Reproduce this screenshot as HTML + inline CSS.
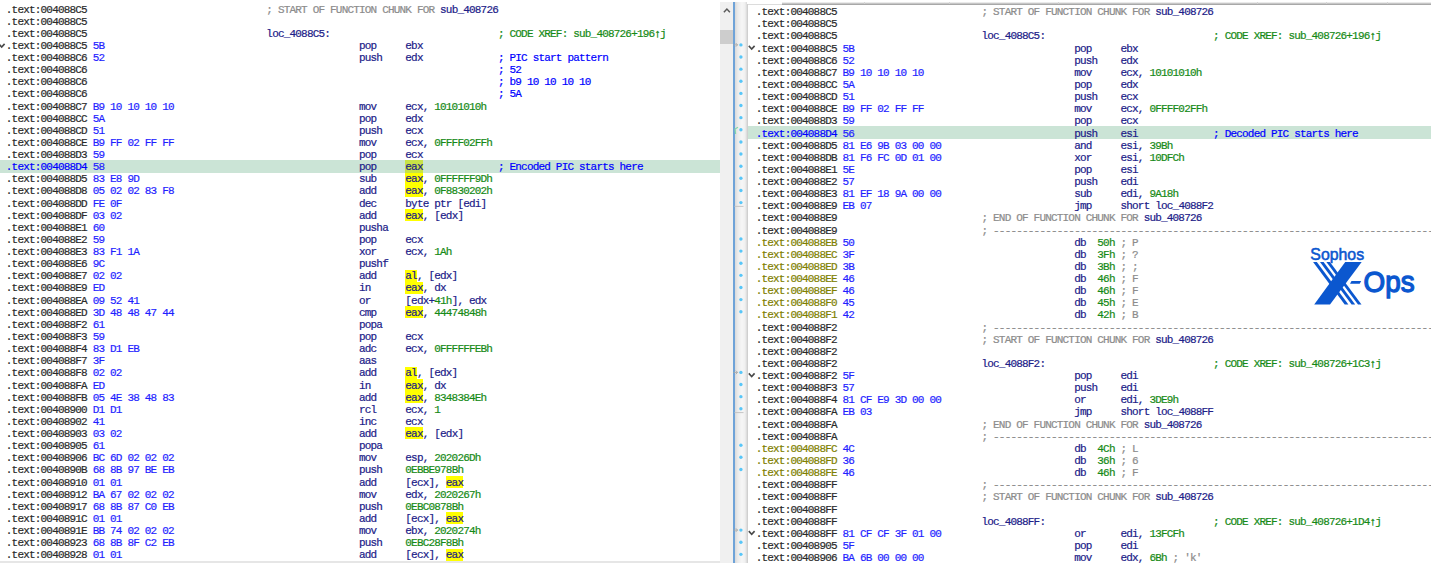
<!DOCTYPE html>
<html><head><meta charset="utf-8"><style>
*{margin:0;padding:0;box-sizing:border-box}
html,body{width:1431px;height:568px;overflow:hidden;background:#fff;position:relative}
.t{position:absolute;font-family:"Liberation Mono",monospace;font-size:11px;line-height:12.13px;letter-spacing:-0.81px;white-space:pre;-webkit-text-stroke:0.2px currentColor}
.a{color:#2a2a2a} .b{color:#1f1fff} .n{color:#202088} .g{color:#168a16} .gr{color:#8c8c8c} .u{color:#0000ff} .o{color:#808000} .h{color:#0000ff}
.ar{color:#168a16;-webkit-text-stroke:0.35px #168a16}
.hl{position:absolute;height:12.13px;background:#cbe4d6}
.ybg{position:absolute;height:12.13px;background:#ffff00}

.sb{position:absolute;left:720px;top:2px;width:13px;height:561px;background:#f0f0f0}
.thumb{position:absolute;left:720px;top:30px;width:13px;height:14px;background:#cdcdcd}
.bline{position:absolute;left:733px;top:2px;width:2px;height:561px;background:#6fa3d8}
.gut{position:absolute;left:735px;top:2px;width:12px;height:561px;background:linear-gradient(to right,#dadada 0px,#ececec 3px,#f6f6f6 7px,#f0f0f0 10px,#d8d8d8 12px)}
.gline{position:absolute;left:747px;top:4px;width:1px;height:559px;background:#d0d0d0}
.tline{position:absolute;left:748px;top:4px;width:683px;height:1px;background:#dcdcdc}
.tline2{position:absolute;left:782px;top:2px;width:649px;height:3px;background:linear-gradient(#f0f0f0 0,#e4e4e4 1px,#a8a8a8 2px,#a8a8a8 3px)}
.dot{position:absolute;width:3.3px;height:3.3px;border-radius:50%;background:#45c2f7}
.sep{position:absolute;left:734px;width:10px;height:1px;background:#b0b0b0}
.bot{position:absolute;left:0;top:561px;width:720px;height:2px;background:#e6e6e6}
.logo{position:absolute;left:1300px;top:240px;width:131px;height:70px}

</style></head><body>
<div id="lp" style="position:absolute;left:0;top:0;width:720px;height:563px;overflow:hidden">
<div class="hl" style="top:160.49px;left:0px;width:720px"></div>
<div class="ybg" style="top:160.49px;left:405.31px;width:17.37px;background:#c8e246"></div>
<div class="ybg" style="top:172.62px;left:405.31px;width:17.37px"></div>
<div class="ybg" style="top:184.75px;left:405.31px;width:17.37px"></div>
<div class="ybg" style="top:209.01px;left:405.31px;width:17.37px"></div>
<div class="ybg" style="top:269.66px;left:405.31px;width:11.58px"></div>
<div class="ybg" style="top:281.79px;left:405.31px;width:17.37px"></div>
<div class="ybg" style="top:306.05px;left:405.31px;width:17.37px"></div>
<div class="ybg" style="top:366.70px;left:405.31px;width:11.58px"></div>
<div class="ybg" style="top:378.83px;left:405.31px;width:17.37px"></div>
<div class="ybg" style="top:390.96px;left:405.31px;width:17.37px"></div>
<div class="ybg" style="top:427.35px;left:405.31px;width:17.37px"></div>
<div class="ybg" style="top:475.87px;left:445.84px;width:17.37px"></div>
<div class="ybg" style="top:512.26px;left:445.84px;width:17.37px"></div>
<div class="ybg" style="top:548.65px;left:445.84px;width:17.37px"></div>
<div class="t a" style="top:3.50px;left:5.80px">.text:004088C5</div>
<div class="t gr" style="top:3.50px;left:266.35px">; START OF FUNCTION CHUNK FOR </div>
<div class="t n" style="top:3.50px;left:440.05px">sub_408726</div>
<div class="t a" style="top:15.63px;left:5.80px">.text:004088C5</div>
<div class="t a" style="top:27.76px;left:5.80px">.text:004088C5</div>
<div class="t n" style="top:27.76px;left:266.35px">loc_4088C5:</div>
<div class="t g" style="top:27.76px;left:497.95px">; CODE XREF: sub_408726+196</div>
<div class="t ar" style="top:27.76px;left:654.28px">↑</div>
<div class="t g" style="top:27.76px;left:660.07px">j</div>
<div class="t a" style="top:39.89px;left:5.80px">.text:004088C5</div>
<div class="t b" style="top:39.89px;left:92.65px">5B</div>
<div class="t n" style="top:39.89px;left:358.99px">pop</div>
<div class="t n" style="top:39.89px;left:405.31px">ebx</div>
<div class="t a" style="top:52.02px;left:5.80px">.text:004088C6</div>
<div class="t b" style="top:52.02px;left:92.65px">52</div>
<div class="t n" style="top:52.02px;left:358.99px">push</div>
<div class="t n" style="top:52.02px;left:405.31px">edx</div>
<div class="t u" style="top:52.02px;left:497.95px">; PIC start pattern</div>
<div class="t a" style="top:64.15px;left:5.80px">.text:004088C6</div>
<div class="t u" style="top:64.15px;left:497.95px">; 52</div>
<div class="t a" style="top:76.28px;left:5.80px">.text:004088C6</div>
<div class="t u" style="top:76.28px;left:497.95px">; b9 10 10 10 10</div>
<div class="t a" style="top:88.41px;left:5.80px">.text:004088C6</div>
<div class="t u" style="top:88.41px;left:497.95px">; 5A</div>
<div class="t a" style="top:100.54px;left:5.80px">.text:004088C7</div>
<div class="t b" style="top:100.54px;left:92.65px">B9 10 10 10 10</div>
<div class="t n" style="top:100.54px;left:358.99px">mov</div>
<div class="t n" style="top:100.54px;left:405.31px">ecx, </div>
<div class="t g" style="top:100.54px;left:434.26px">10101010h</div>
<div class="t a" style="top:112.67px;left:5.80px">.text:004088CC</div>
<div class="t b" style="top:112.67px;left:92.65px">5A</div>
<div class="t n" style="top:112.67px;left:358.99px">pop</div>
<div class="t n" style="top:112.67px;left:405.31px">edx</div>
<div class="t a" style="top:124.80px;left:5.80px">.text:004088CD</div>
<div class="t b" style="top:124.80px;left:92.65px">51</div>
<div class="t n" style="top:124.80px;left:358.99px">push</div>
<div class="t n" style="top:124.80px;left:405.31px">ecx</div>
<div class="t a" style="top:136.93px;left:5.80px">.text:004088CE</div>
<div class="t b" style="top:136.93px;left:92.65px">B9 FF 02 FF FF</div>
<div class="t n" style="top:136.93px;left:358.99px">mov</div>
<div class="t n" style="top:136.93px;left:405.31px">ecx, </div>
<div class="t g" style="top:136.93px;left:434.26px">0FFFF02FFh</div>
<div class="t a" style="top:149.06px;left:5.80px">.text:004088D3</div>
<div class="t b" style="top:149.06px;left:92.65px">59</div>
<div class="t n" style="top:149.06px;left:358.99px">pop</div>
<div class="t n" style="top:149.06px;left:405.31px">ecx</div>
<div class="t h" style="top:161.19px;left:5.80px">.text:004088D4</div>
<div class="t b" style="top:161.19px;left:92.65px">58</div>
<div class="t n" style="top:161.19px;left:358.99px">pop</div>
<div class="t n" style="top:161.19px;left:405.31px">eax</div>
<div class="t u" style="top:161.19px;left:497.95px">; Encoded PIC starts here</div>
<div class="t a" style="top:173.32px;left:5.80px">.text:004088D5</div>
<div class="t b" style="top:173.32px;left:92.65px">83 E8 9D</div>
<div class="t n" style="top:173.32px;left:358.99px">sub</div>
<div class="t n" style="top:173.32px;left:405.31px">eax</div>
<div class="t n" style="top:173.32px;left:422.68px">, </div>
<div class="t g" style="top:173.32px;left:434.26px">0FFFFFF9Dh</div>
<div class="t a" style="top:185.45px;left:5.80px">.text:004088D8</div>
<div class="t b" style="top:185.45px;left:92.65px">05 02 02 83 F8</div>
<div class="t n" style="top:185.45px;left:358.99px">add</div>
<div class="t n" style="top:185.45px;left:405.31px">eax</div>
<div class="t n" style="top:185.45px;left:422.68px">, </div>
<div class="t g" style="top:185.45px;left:434.26px">0F8830202h</div>
<div class="t a" style="top:197.58px;left:5.80px">.text:004088DD</div>
<div class="t b" style="top:197.58px;left:92.65px">FE 0F</div>
<div class="t n" style="top:197.58px;left:358.99px">dec</div>
<div class="t n" style="top:197.58px;left:405.31px">byte ptr [edi]</div>
<div class="t a" style="top:209.71px;left:5.80px">.text:004088DF</div>
<div class="t b" style="top:209.71px;left:92.65px">03 02</div>
<div class="t n" style="top:209.71px;left:358.99px">add</div>
<div class="t n" style="top:209.71px;left:405.31px">eax</div>
<div class="t n" style="top:209.71px;left:422.68px">, [edx]</div>
<div class="t a" style="top:221.84px;left:5.80px">.text:004088E1</div>
<div class="t b" style="top:221.84px;left:92.65px">60</div>
<div class="t n" style="top:221.84px;left:358.99px">pusha</div>
<div class="t a" style="top:233.97px;left:5.80px">.text:004088E2</div>
<div class="t b" style="top:233.97px;left:92.65px">59</div>
<div class="t n" style="top:233.97px;left:358.99px">pop</div>
<div class="t n" style="top:233.97px;left:405.31px">ecx</div>
<div class="t a" style="top:246.10px;left:5.80px">.text:004088E3</div>
<div class="t b" style="top:246.10px;left:92.65px">83 F1 1A</div>
<div class="t n" style="top:246.10px;left:358.99px">xor</div>
<div class="t n" style="top:246.10px;left:405.31px">ecx, </div>
<div class="t g" style="top:246.10px;left:434.26px">1Ah</div>
<div class="t a" style="top:258.23px;left:5.80px">.text:004088E6</div>
<div class="t b" style="top:258.23px;left:92.65px">9C</div>
<div class="t n" style="top:258.23px;left:358.99px">pushf</div>
<div class="t a" style="top:270.36px;left:5.80px">.text:004088E7</div>
<div class="t b" style="top:270.36px;left:92.65px">02 02</div>
<div class="t n" style="top:270.36px;left:358.99px">add</div>
<div class="t n" style="top:270.36px;left:405.31px">al</div>
<div class="t n" style="top:270.36px;left:416.89px">, [edx]</div>
<div class="t a" style="top:282.49px;left:5.80px">.text:004088E9</div>
<div class="t b" style="top:282.49px;left:92.65px">ED</div>
<div class="t n" style="top:282.49px;left:358.99px">in</div>
<div class="t n" style="top:282.49px;left:405.31px">eax</div>
<div class="t n" style="top:282.49px;left:422.68px">, dx</div>
<div class="t a" style="top:294.62px;left:5.80px">.text:004088EA</div>
<div class="t b" style="top:294.62px;left:92.65px">09 52 41</div>
<div class="t n" style="top:294.62px;left:358.99px">or</div>
<div class="t n" style="top:294.62px;left:405.31px">[edx+</div>
<div class="t g" style="top:294.62px;left:434.26px">41h</div>
<div class="t n" style="top:294.62px;left:451.63px">], edx</div>
<div class="t a" style="top:306.75px;left:5.80px">.text:004088ED</div>
<div class="t b" style="top:306.75px;left:92.65px">3D 48 48 47 44</div>
<div class="t n" style="top:306.75px;left:358.99px">cmp</div>
<div class="t n" style="top:306.75px;left:405.31px">eax</div>
<div class="t n" style="top:306.75px;left:422.68px">, </div>
<div class="t g" style="top:306.75px;left:434.26px">44474848h</div>
<div class="t a" style="top:318.88px;left:5.80px">.text:004088F2</div>
<div class="t b" style="top:318.88px;left:92.65px">61</div>
<div class="t n" style="top:318.88px;left:358.99px">popa</div>
<div class="t a" style="top:331.01px;left:5.80px">.text:004088F3</div>
<div class="t b" style="top:331.01px;left:92.65px">59</div>
<div class="t n" style="top:331.01px;left:358.99px">pop</div>
<div class="t n" style="top:331.01px;left:405.31px">ecx</div>
<div class="t a" style="top:343.14px;left:5.80px">.text:004088F4</div>
<div class="t b" style="top:343.14px;left:92.65px">83 D1 EB</div>
<div class="t n" style="top:343.14px;left:358.99px">adc</div>
<div class="t n" style="top:343.14px;left:405.31px">ecx, </div>
<div class="t g" style="top:343.14px;left:434.26px">0FFFFFFEBh</div>
<div class="t a" style="top:355.27px;left:5.80px">.text:004088F7</div>
<div class="t b" style="top:355.27px;left:92.65px">3F</div>
<div class="t n" style="top:355.27px;left:358.99px">aas</div>
<div class="t a" style="top:367.40px;left:5.80px">.text:004088F8</div>
<div class="t b" style="top:367.40px;left:92.65px">02 02</div>
<div class="t n" style="top:367.40px;left:358.99px">add</div>
<div class="t n" style="top:367.40px;left:405.31px">al</div>
<div class="t n" style="top:367.40px;left:416.89px">, [edx]</div>
<div class="t a" style="top:379.53px;left:5.80px">.text:004088FA</div>
<div class="t b" style="top:379.53px;left:92.65px">ED</div>
<div class="t n" style="top:379.53px;left:358.99px">in</div>
<div class="t n" style="top:379.53px;left:405.31px">eax</div>
<div class="t n" style="top:379.53px;left:422.68px">, dx</div>
<div class="t a" style="top:391.66px;left:5.80px">.text:004088FB</div>
<div class="t b" style="top:391.66px;left:92.65px">05 4E 38 48 83</div>
<div class="t n" style="top:391.66px;left:358.99px">add</div>
<div class="t n" style="top:391.66px;left:405.31px">eax</div>
<div class="t n" style="top:391.66px;left:422.68px">, </div>
<div class="t g" style="top:391.66px;left:434.26px">8348384Eh</div>
<div class="t a" style="top:403.79px;left:5.80px">.text:00408900</div>
<div class="t b" style="top:403.79px;left:92.65px">D1 D1</div>
<div class="t n" style="top:403.79px;left:358.99px">rcl</div>
<div class="t n" style="top:403.79px;left:405.31px">ecx, </div>
<div class="t g" style="top:403.79px;left:434.26px">1</div>
<div class="t a" style="top:415.92px;left:5.80px">.text:00408902</div>
<div class="t b" style="top:415.92px;left:92.65px">41</div>
<div class="t n" style="top:415.92px;left:358.99px">inc</div>
<div class="t n" style="top:415.92px;left:405.31px">ecx</div>
<div class="t a" style="top:428.05px;left:5.80px">.text:00408903</div>
<div class="t b" style="top:428.05px;left:92.65px">03 02</div>
<div class="t n" style="top:428.05px;left:358.99px">add</div>
<div class="t n" style="top:428.05px;left:405.31px">eax</div>
<div class="t n" style="top:428.05px;left:422.68px">, [edx]</div>
<div class="t a" style="top:440.18px;left:5.80px">.text:00408905</div>
<div class="t b" style="top:440.18px;left:92.65px">61</div>
<div class="t n" style="top:440.18px;left:358.99px">popa</div>
<div class="t a" style="top:452.31px;left:5.80px">.text:00408906</div>
<div class="t b" style="top:452.31px;left:92.65px">BC 6D 02 02 02</div>
<div class="t n" style="top:452.31px;left:358.99px">mov</div>
<div class="t n" style="top:452.31px;left:405.31px">esp, </div>
<div class="t g" style="top:452.31px;left:434.26px">202026Dh</div>
<div class="t a" style="top:464.44px;left:5.80px">.text:0040890B</div>
<div class="t b" style="top:464.44px;left:92.65px">68 8B 97 BE EB</div>
<div class="t n" style="top:464.44px;left:358.99px">push</div>
<div class="t g" style="top:464.44px;left:405.31px">0EBBE978Bh</div>
<div class="t a" style="top:476.57px;left:5.80px">.text:00408910</div>
<div class="t b" style="top:476.57px;left:92.65px">01 01</div>
<div class="t n" style="top:476.57px;left:358.99px">add</div>
<div class="t n" style="top:476.57px;left:405.31px">[ecx], </div>
<div class="t n" style="top:476.57px;left:445.84px">eax</div>
<div class="t a" style="top:488.70px;left:5.80px">.text:00408912</div>
<div class="t b" style="top:488.70px;left:92.65px">BA 67 02 02 02</div>
<div class="t n" style="top:488.70px;left:358.99px">mov</div>
<div class="t n" style="top:488.70px;left:405.31px">edx, </div>
<div class="t g" style="top:488.70px;left:434.26px">2020267h</div>
<div class="t a" style="top:500.83px;left:5.80px">.text:00408917</div>
<div class="t b" style="top:500.83px;left:92.65px">68 8B 87 C0 EB</div>
<div class="t n" style="top:500.83px;left:358.99px">push</div>
<div class="t g" style="top:500.83px;left:405.31px">0EBC0878Bh</div>
<div class="t a" style="top:512.96px;left:5.80px">.text:0040891C</div>
<div class="t b" style="top:512.96px;left:92.65px">01 01</div>
<div class="t n" style="top:512.96px;left:358.99px">add</div>
<div class="t n" style="top:512.96px;left:405.31px">[ecx], </div>
<div class="t n" style="top:512.96px;left:445.84px">eax</div>
<div class="t a" style="top:525.09px;left:5.80px">.text:0040891E</div>
<div class="t b" style="top:525.09px;left:92.65px">BB 74 02 02 02</div>
<div class="t n" style="top:525.09px;left:358.99px">mov</div>
<div class="t n" style="top:525.09px;left:405.31px">ebx, </div>
<div class="t g" style="top:525.09px;left:434.26px">2020274h</div>
<div class="t a" style="top:537.22px;left:5.80px">.text:00408923</div>
<div class="t b" style="top:537.22px;left:92.65px">68 8B 8F C2 EB</div>
<div class="t n" style="top:537.22px;left:358.99px">push</div>
<div class="t g" style="top:537.22px;left:405.31px">0EBC28F8Bh</div>
<div class="t a" style="top:549.35px;left:5.80px">.text:00408928</div>
<div class="t b" style="top:549.35px;left:92.65px">01 01</div>
<div class="t n" style="top:549.35px;left:358.99px">add</div>
<div class="t n" style="top:549.35px;left:405.31px">[ecx], </div>
<div class="t n" style="top:549.35px;left:445.84px">eax</div>
</div>
<div id="rp" style="position:absolute;left:748px;top:5px;width:683px;height:558px;overflow:hidden">
<div style="position:absolute;left:-748px;top:-5px;width:1431px;height:568px">
<div class="hl" style="top:126.40px;left:748px;width:683px"></div>
<div class="t a" style="top:6.20px;left:755.70px">.text:004088C5</div>
<div class="t gr" style="top:6.20px;left:981.51px">; START OF FUNCTION CHUNK FOR </div>
<div class="t n" style="top:6.20px;left:1155.21px">sub_408726</div>
<div class="t a" style="top:18.33px;left:755.70px">.text:004088C5</div>
<div class="t a" style="top:30.46px;left:755.70px">.text:004088C5</div>
<div class="t n" style="top:30.46px;left:981.51px">loc_4088C5:</div>
<div class="t g" style="top:30.46px;left:1213.11px">; CODE XREF: sub_408726+196</div>
<div class="t ar" style="top:30.46px;left:1369.44px">↑</div>
<div class="t g" style="top:30.46px;left:1375.23px">j</div>
<div class="t a" style="top:42.59px;left:755.70px">.text:004088C5</div>
<div class="t b" style="top:42.59px;left:842.55px">5B</div>
<div class="t n" style="top:42.59px;left:1074.15px">pop</div>
<div class="t n" style="top:42.59px;left:1120.47px">ebx</div>
<div class="t a" style="top:54.72px;left:755.70px">.text:004088C6</div>
<div class="t b" style="top:54.72px;left:842.55px">52</div>
<div class="t n" style="top:54.72px;left:1074.15px">push</div>
<div class="t n" style="top:54.72px;left:1120.47px">edx</div>
<div class="t a" style="top:66.85px;left:755.70px">.text:004088C7</div>
<div class="t b" style="top:66.85px;left:842.55px">B9 10 10 10 10</div>
<div class="t n" style="top:66.85px;left:1074.15px">mov</div>
<div class="t n" style="top:66.85px;left:1120.47px">ecx, </div>
<div class="t g" style="top:66.85px;left:1149.42px">10101010h</div>
<div class="t a" style="top:78.98px;left:755.70px">.text:004088CC</div>
<div class="t b" style="top:78.98px;left:842.55px">5A</div>
<div class="t n" style="top:78.98px;left:1074.15px">pop</div>
<div class="t n" style="top:78.98px;left:1120.47px">edx</div>
<div class="t a" style="top:91.11px;left:755.70px">.text:004088CD</div>
<div class="t b" style="top:91.11px;left:842.55px">51</div>
<div class="t n" style="top:91.11px;left:1074.15px">push</div>
<div class="t n" style="top:91.11px;left:1120.47px">ecx</div>
<div class="t a" style="top:103.24px;left:755.70px">.text:004088CE</div>
<div class="t b" style="top:103.24px;left:842.55px">B9 FF 02 FF FF</div>
<div class="t n" style="top:103.24px;left:1074.15px">mov</div>
<div class="t n" style="top:103.24px;left:1120.47px">ecx, </div>
<div class="t g" style="top:103.24px;left:1149.42px">0FFFF02FFh</div>
<div class="t a" style="top:115.37px;left:755.70px">.text:004088D3</div>
<div class="t b" style="top:115.37px;left:842.55px">59</div>
<div class="t n" style="top:115.37px;left:1074.15px">pop</div>
<div class="t n" style="top:115.37px;left:1120.47px">ecx</div>
<div class="t h" style="top:127.50px;left:755.70px">.text:004088D4</div>
<div class="t b" style="top:127.50px;left:842.55px">56</div>
<div class="t n" style="top:127.50px;left:1074.15px">push</div>
<div class="t n" style="top:127.50px;left:1120.47px">esi</div>
<div class="t u" style="top:127.50px;left:1213.11px">; Decoded PIC starts here</div>
<div class="t a" style="top:139.63px;left:755.70px">.text:004088D5</div>
<div class="t b" style="top:139.63px;left:842.55px">81 E6 9B 03 00 00</div>
<div class="t n" style="top:139.63px;left:1074.15px">and</div>
<div class="t n" style="top:139.63px;left:1120.47px">esi, </div>
<div class="t g" style="top:139.63px;left:1149.42px">39Bh</div>
<div class="t a" style="top:151.76px;left:755.70px">.text:004088DB</div>
<div class="t b" style="top:151.76px;left:842.55px">81 F6 FC 0D 01 00</div>
<div class="t n" style="top:151.76px;left:1074.15px">xor</div>
<div class="t n" style="top:151.76px;left:1120.47px">esi, </div>
<div class="t g" style="top:151.76px;left:1149.42px">10DFCh</div>
<div class="t a" style="top:163.89px;left:755.70px">.text:004088E1</div>
<div class="t b" style="top:163.89px;left:842.55px">5E</div>
<div class="t n" style="top:163.89px;left:1074.15px">pop</div>
<div class="t n" style="top:163.89px;left:1120.47px">esi</div>
<div class="t a" style="top:176.02px;left:755.70px">.text:004088E2</div>
<div class="t b" style="top:176.02px;left:842.55px">57</div>
<div class="t n" style="top:176.02px;left:1074.15px">push</div>
<div class="t n" style="top:176.02px;left:1120.47px">edi</div>
<div class="t a" style="top:188.15px;left:755.70px">.text:004088E3</div>
<div class="t b" style="top:188.15px;left:842.55px">81 EF 18 9A 00 00</div>
<div class="t n" style="top:188.15px;left:1074.15px">sub</div>
<div class="t n" style="top:188.15px;left:1120.47px">edi, </div>
<div class="t g" style="top:188.15px;left:1149.42px">9A18h</div>
<div class="t a" style="top:200.28px;left:755.70px">.text:004088E9</div>
<div class="t b" style="top:200.28px;left:842.55px">EB 07</div>
<div class="t n" style="top:200.28px;left:1074.15px">jmp</div>
<div class="t n" style="top:200.28px;left:1120.47px">short loc_4088F2</div>
<div class="t a" style="top:212.41px;left:755.70px">.text:004088E9</div>
<div class="t gr" style="top:212.41px;left:981.51px">; END OF FUNCTION CHUNK FOR </div>
<div class="t n" style="top:212.41px;left:1143.63px">sub_408726</div>
<div class="t a" style="top:224.54px;left:755.70px">.text:004088E9</div>
<div class="t gr" style="top:224.54px;left:981.51px">; ----------------------------------------------------------------------------</div>
<div class="t o" style="top:236.67px;left:755.70px">.text:004088EB</div>
<div class="t b" style="top:236.67px;left:842.55px">50</div>
<div class="t n" style="top:236.67px;left:1074.15px">db</div>
<div class="t g" style="top:236.67px;left:1097.31px">50h</div>
<div class="t gr" style="top:236.67px;left:1120.47px">; P</div>
<div class="t o" style="top:248.80px;left:755.70px">.text:004088EC</div>
<div class="t b" style="top:248.80px;left:842.55px">3F</div>
<div class="t n" style="top:248.80px;left:1074.15px">db</div>
<div class="t g" style="top:248.80px;left:1097.31px">3Fh</div>
<div class="t gr" style="top:248.80px;left:1120.47px">; ?</div>
<div class="t o" style="top:260.93px;left:755.70px">.text:004088ED</div>
<div class="t b" style="top:260.93px;left:842.55px">3B</div>
<div class="t n" style="top:260.93px;left:1074.15px">db</div>
<div class="t g" style="top:260.93px;left:1097.31px">3Bh</div>
<div class="t gr" style="top:260.93px;left:1120.47px">; ;</div>
<div class="t o" style="top:273.06px;left:755.70px">.text:004088EE</div>
<div class="t b" style="top:273.06px;left:842.55px">46</div>
<div class="t n" style="top:273.06px;left:1074.15px">db</div>
<div class="t g" style="top:273.06px;left:1097.31px">46h</div>
<div class="t gr" style="top:273.06px;left:1120.47px">; F</div>
<div class="t o" style="top:285.19px;left:755.70px">.text:004088EF</div>
<div class="t b" style="top:285.19px;left:842.55px">46</div>
<div class="t n" style="top:285.19px;left:1074.15px">db</div>
<div class="t g" style="top:285.19px;left:1097.31px">46h</div>
<div class="t gr" style="top:285.19px;left:1120.47px">; F</div>
<div class="t o" style="top:297.32px;left:755.70px">.text:004088F0</div>
<div class="t b" style="top:297.32px;left:842.55px">45</div>
<div class="t n" style="top:297.32px;left:1074.15px">db</div>
<div class="t g" style="top:297.32px;left:1097.31px">45h</div>
<div class="t gr" style="top:297.32px;left:1120.47px">; E</div>
<div class="t o" style="top:309.45px;left:755.70px">.text:004088F1</div>
<div class="t b" style="top:309.45px;left:842.55px">42</div>
<div class="t n" style="top:309.45px;left:1074.15px">db</div>
<div class="t g" style="top:309.45px;left:1097.31px">42h</div>
<div class="t gr" style="top:309.45px;left:1120.47px">; B</div>
<div class="t a" style="top:321.58px;left:755.70px">.text:004088F2</div>
<div class="t gr" style="top:321.58px;left:981.51px">; ----------------------------------------------------------------------------</div>
<div class="t a" style="top:333.71px;left:755.70px">.text:004088F2</div>
<div class="t gr" style="top:333.71px;left:981.51px">; START OF FUNCTION CHUNK FOR </div>
<div class="t n" style="top:333.71px;left:1155.21px">sub_408726</div>
<div class="t a" style="top:345.84px;left:755.70px">.text:004088F2</div>
<div class="t a" style="top:357.97px;left:755.70px">.text:004088F2</div>
<div class="t n" style="top:357.97px;left:981.51px">loc_4088F2:</div>
<div class="t g" style="top:357.97px;left:1213.11px">; CODE XREF: sub_408726+1C3</div>
<div class="t ar" style="top:357.97px;left:1369.44px">↑</div>
<div class="t g" style="top:357.97px;left:1375.23px">j</div>
<div class="t a" style="top:370.10px;left:755.70px">.text:004088F2</div>
<div class="t b" style="top:370.10px;left:842.55px">5F</div>
<div class="t n" style="top:370.10px;left:1074.15px">pop</div>
<div class="t n" style="top:370.10px;left:1120.47px">edi</div>
<div class="t a" style="top:382.23px;left:755.70px">.text:004088F3</div>
<div class="t b" style="top:382.23px;left:842.55px">57</div>
<div class="t n" style="top:382.23px;left:1074.15px">push</div>
<div class="t n" style="top:382.23px;left:1120.47px">edi</div>
<div class="t a" style="top:394.36px;left:755.70px">.text:004088F4</div>
<div class="t b" style="top:394.36px;left:842.55px">81 CF E9 3D 00 00</div>
<div class="t n" style="top:394.36px;left:1074.15px">or</div>
<div class="t n" style="top:394.36px;left:1120.47px">edi, </div>
<div class="t g" style="top:394.36px;left:1149.42px">3DE9h</div>
<div class="t a" style="top:406.49px;left:755.70px">.text:004088FA</div>
<div class="t b" style="top:406.49px;left:842.55px">EB 03</div>
<div class="t n" style="top:406.49px;left:1074.15px">jmp</div>
<div class="t n" style="top:406.49px;left:1120.47px">short loc_4088FF</div>
<div class="t a" style="top:418.62px;left:755.70px">.text:004088FA</div>
<div class="t gr" style="top:418.62px;left:981.51px">; END OF FUNCTION CHUNK FOR </div>
<div class="t n" style="top:418.62px;left:1143.63px">sub_408726</div>
<div class="t a" style="top:430.75px;left:755.70px">.text:004088FA</div>
<div class="t gr" style="top:430.75px;left:981.51px">; ----------------------------------------------------------------------------</div>
<div class="t o" style="top:442.88px;left:755.70px">.text:004088FC</div>
<div class="t b" style="top:442.88px;left:842.55px">4C</div>
<div class="t n" style="top:442.88px;left:1074.15px">db</div>
<div class="t g" style="top:442.88px;left:1097.31px">4Ch</div>
<div class="t gr" style="top:442.88px;left:1120.47px">; L</div>
<div class="t o" style="top:455.01px;left:755.70px">.text:004088FD</div>
<div class="t b" style="top:455.01px;left:842.55px">36</div>
<div class="t n" style="top:455.01px;left:1074.15px">db</div>
<div class="t g" style="top:455.01px;left:1097.31px">36h</div>
<div class="t gr" style="top:455.01px;left:1120.47px">; 6</div>
<div class="t o" style="top:467.14px;left:755.70px">.text:004088FE</div>
<div class="t b" style="top:467.14px;left:842.55px">46</div>
<div class="t n" style="top:467.14px;left:1074.15px">db</div>
<div class="t g" style="top:467.14px;left:1097.31px">46h</div>
<div class="t gr" style="top:467.14px;left:1120.47px">; F</div>
<div class="t a" style="top:479.27px;left:755.70px">.text:004088FF</div>
<div class="t gr" style="top:479.27px;left:981.51px">; ----------------------------------------------------------------------------</div>
<div class="t a" style="top:491.40px;left:755.70px">.text:004088FF</div>
<div class="t gr" style="top:491.40px;left:981.51px">; START OF FUNCTION CHUNK FOR </div>
<div class="t n" style="top:491.40px;left:1155.21px">sub_408726</div>
<div class="t a" style="top:503.53px;left:755.70px">.text:004088FF</div>
<div class="t a" style="top:515.66px;left:755.70px">.text:004088FF</div>
<div class="t n" style="top:515.66px;left:981.51px">loc_4088FF:</div>
<div class="t g" style="top:515.66px;left:1213.11px">; CODE XREF: sub_408726+1D4</div>
<div class="t ar" style="top:515.66px;left:1369.44px">↑</div>
<div class="t g" style="top:515.66px;left:1375.23px">j</div>
<div class="t a" style="top:527.79px;left:755.70px">.text:004088FF</div>
<div class="t b" style="top:527.79px;left:842.55px">81 CF CF 3F 01 00</div>
<div class="t n" style="top:527.79px;left:1074.15px">or</div>
<div class="t n" style="top:527.79px;left:1120.47px">edi, </div>
<div class="t g" style="top:527.79px;left:1149.42px">13FCFh</div>
<div class="t a" style="top:539.92px;left:755.70px">.text:00408905</div>
<div class="t b" style="top:539.92px;left:842.55px">5F</div>
<div class="t n" style="top:539.92px;left:1074.15px">pop</div>
<div class="t n" style="top:539.92px;left:1120.47px">edi</div>
<div class="t a" style="top:552.05px;left:755.70px">.text:00408906</div>
<div class="t b" style="top:552.05px;left:842.55px">BA 6B 00 00 00</div>
<div class="t n" style="top:552.05px;left:1074.15px">mov</div>
<div class="t n" style="top:552.05px;left:1120.47px">edx, </div>
<div class="t g" style="top:552.05px;left:1149.42px">6Bh</div>
<div class="t n" style="top:552.05px;left:1166.79px"> </div>
<div class="t gr" style="top:552.05px;left:1172.58px">; 'k'</div>
</div></div>
<div class="sb"></div><div class="thumb"></div>
<svg style="position:absolute;left:720px;top:0" width="13" height="20"><polyline points="3.9,12.2 6.9,9.1 9.9,12.2" fill="none" stroke="#5a5a5a" stroke-width="1.5"/></svg>
<div class="bline"></div><div class="gut"></div><div class="gline"></div><div class="tline"></div><div class="tline2"></div><div class="bot"></div>
<svg style="position:absolute;left:0;top:0" width="1431" height="568">
<circle cx="740.9" cy="44.89" r="1.7" fill="#58c6f8"/>
<circle cx="740.9" cy="57.02" r="1.7" fill="#58c6f8"/>
<circle cx="740.9" cy="69.15" r="1.7" fill="#58c6f8"/>
<circle cx="740.9" cy="81.28" r="1.7" fill="#58c6f8"/>
<circle cx="740.9" cy="93.41" r="1.7" fill="#58c6f8"/>
<circle cx="740.9" cy="105.54" r="1.7" fill="#58c6f8"/>
<circle cx="740.9" cy="117.67" r="1.7" fill="#58c6f8"/>
<circle cx="740.9" cy="129.80" r="1.7" fill="#58c6f8"/>
<circle cx="740.9" cy="141.93" r="1.7" fill="#58c6f8"/>
<circle cx="740.9" cy="154.06" r="1.7" fill="#58c6f8"/>
<circle cx="740.9" cy="166.19" r="1.7" fill="#58c6f8"/>
<circle cx="740.9" cy="178.32" r="1.7" fill="#58c6f8"/>
<circle cx="740.9" cy="190.45" r="1.7" fill="#58c6f8"/>
<circle cx="740.9" cy="202.58" r="1.7" fill="#58c6f8"/>
<circle cx="740.9" cy="238.97" r="1.7" fill="#58c6f8"/>
<circle cx="740.9" cy="251.10" r="1.7" fill="#58c6f8"/>
<circle cx="740.9" cy="263.23" r="1.7" fill="#58c6f8"/>
<circle cx="740.9" cy="275.36" r="1.7" fill="#58c6f8"/>
<circle cx="740.9" cy="287.49" r="1.7" fill="#58c6f8"/>
<circle cx="740.9" cy="299.62" r="1.7" fill="#58c6f8"/>
<circle cx="740.9" cy="311.75" r="1.7" fill="#58c6f8"/>
<circle cx="740.9" cy="372.40" r="1.7" fill="#58c6f8"/>
<circle cx="740.9" cy="384.53" r="1.7" fill="#58c6f8"/>
<circle cx="740.9" cy="396.66" r="1.7" fill="#58c6f8"/>
<circle cx="740.9" cy="408.79" r="1.7" fill="#58c6f8"/>
<circle cx="740.9" cy="445.18" r="1.7" fill="#58c6f8"/>
<circle cx="740.9" cy="457.31" r="1.7" fill="#58c6f8"/>
<circle cx="740.9" cy="469.44" r="1.7" fill="#58c6f8"/>
<circle cx="740.9" cy="530.09" r="1.7" fill="#58c6f8"/>
<circle cx="740.9" cy="542.22" r="1.7" fill="#58c6f8"/>
<circle cx="740.9" cy="554.35" r="1.7" fill="#58c6f8"/>
<rect x="734.5" y="205.88" width="9" height="1" fill="#c4c4c4"/>
<rect x="734.5" y="412.09" width="9" height="1" fill="#c4c4c4"/>
<path d="M733.5,44.89 H737.6 M735.8,43.09 L737.6,44.89 L735.8,46.69" fill="none" stroke="#a8a8a8" stroke-width="0.9"/>
<polyline points="748.8,45.89 751.7,49.09 754.6,45.89" fill="none" stroke="#4a4a4a" stroke-width="1.6"/>
<path d="M733.5,372.40 H737.6 M735.8,370.60 L737.6,372.40 L735.8,374.20" fill="none" stroke="#a8a8a8" stroke-width="0.9"/>
<polyline points="748.8,373.40 751.7,376.60 754.6,373.40" fill="none" stroke="#4a4a4a" stroke-width="1.6"/>
<path d="M733.5,530.09 H737.6 M735.8,528.29 L737.6,530.09 L735.8,531.89" fill="none" stroke="#a8a8a8" stroke-width="0.9"/>
<polyline points="748.8,531.09 751.7,534.29 754.6,531.09" fill="none" stroke="#4a4a4a" stroke-width="1.6"/>
<polyline points="-1.2,43.89 1.7,47.09 4.6,43.89" fill="none" stroke="#4a4a4a" stroke-width="1.6"/>
<path d="M738,127.3 L735,129 L735.6,134" fill="none" stroke="#80d8a8" stroke-width="1.2"/>
<rect x="864" y="2" width="1" height="2" fill="#d4d4d4"/><rect x="949" y="2" width="1" height="2" fill="#d4d4d4"/><rect x="1058" y="2" width="1" height="2" fill="#d4d4d4"/><rect x="1257" y="2" width="1" height="2" fill="#d4d4d4"/><rect x="1326" y="2" width="1" height="2" fill="#d4d4d4"/><rect x="1387" y="2" width="1" height="2" fill="#d4d4d4"/>
</svg>
<!--LOGO-->
<svg style="position:absolute;left:1300px;top:240px" width="131" height="70" viewBox="1300 240 131 70">
<g fill="#0b57cf">
<text x="1310.3" y="259.7" font-family="Liberation Sans" font-size="16.5" textLength="53.8" lengthAdjust="spacingAndGlyphs" stroke="#0b57cf" stroke-width="0.55">Sophos</text>
<polygon points="1313.1,262 1316.8,262 1348.4,304.6 1344.7,304.6"/>
<polygon points="1320,262 1323.6,262 1355.2,304.6 1351.6,304.6"/>
<polygon points="1326.4,262 1329.9,262 1361.5,304.6 1358,304.6"/>
<polygon points="1345.2,262 1361.7,262 1330,304.6 1314.2,304.6"/>
<polygon points="1351.5,281.1 1361.2,281.1 1359.7,283.8 1350,283.8"/>
<text x="1363.6" y="291.6" font-family="Liberation Sans" font-size="29" textLength="51" lengthAdjust="spacingAndGlyphs" stroke="#0b57cf" stroke-width="1.3">Ops</text>
</g>
</svg>

</body></html>
